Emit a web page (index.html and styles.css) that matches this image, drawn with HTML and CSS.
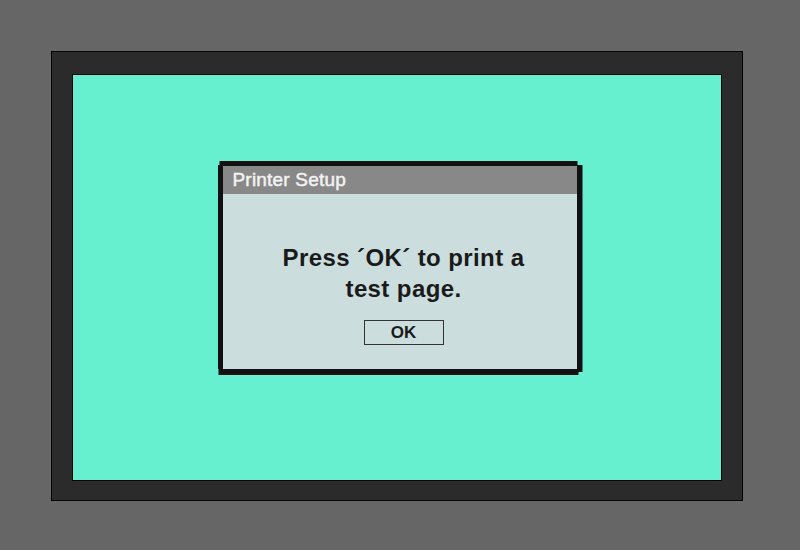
FILE: index.html
```html
<!DOCTYPE html>
<html>
<head>
<meta charset="utf-8">
<link rel="stylesheet" href="styles.css">
</head>
<body>
<div class="frame">
  <div class="screen">
    <div class="dialog">
      <div class="panel">
        <div class="title">Printer Setup</div>
        <div class="body">
          <p class="msg">Press ´OK´ to print a<br>test page.</p>
          <button class="ok">OK</button>
        </div>
      </div>
    </div>
  </div>
</div>
</body>
</html>
```
FILE: styles.css
```css
html, body {
  margin: 0;
  padding: 0;
}
body {
  background: #666666;
  width: 800px;
  height: 550px;
  box-sizing: border-box;
  padding: 51px 0 0 51px;
  font-family: "Liberation Sans", Arial, sans-serif;
}
.frame {
  box-sizing: border-box;
  width: 692px;
  height: 450px;
  background: #2b2b2b;
  border: 1px solid #000;
  padding: 22px 0 0 20px;
}
.screen {
  box-sizing: border-box;
  width: 650px;
  height: 407px;
  background: #67f0cf;
  border: 1px solid #000;
  display: flex;
  justify-content: center;
  align-items: flex-start;
  padding: 86px 0 0 6px;
}
.dialog {
  background: #111;
  padding: 5px 6px 6px 5px;
  clip-path: polygon(2px 0, 360px 0, 360px 4px, 365px 4px, 365px 211px, 361px 211px, 361px 214px, 1px 214px, 1px 208px, 0 208px, 0 4px, 2px 4px);
}
.panel {
  width: 354px;
  height: 203px;
  background: #cbdedd;
  display: flex;
  flex-direction: column;
}
.title {
  height: 28px;
  line-height: 28px;
  background: #888888;
  color: #f2f2f2;
  font-size: 19px;
  padding-left: 10px;
  letter-spacing: 0.2px;
  -webkit-text-stroke: 0.5px #f2f2f2;
}
.body {
  flex: 1;
  display: flex;
  flex-direction: column;
  align-items: center;
  padding: 48px 0 0 8px;
}
.msg {
  margin: 0;
  font-size: 24px;
  line-height: 31px;
  font-weight: bold;
  letter-spacing: 0.4px;
  text-align: center;
  color: #1a1a1a;
}
.ok {
  margin-top: 16px;
  box-sizing: border-box;
  width: 80px;
  height: 25px;
  border: 1px solid #333;
  background: #cbdedd;
  font-family: "Liberation Sans", Arial, sans-serif;
  font-size: 17px;
  font-weight: bold;
  color: #1a1a1a;
  padding: 0;
  line-height: 23px;
}
```
